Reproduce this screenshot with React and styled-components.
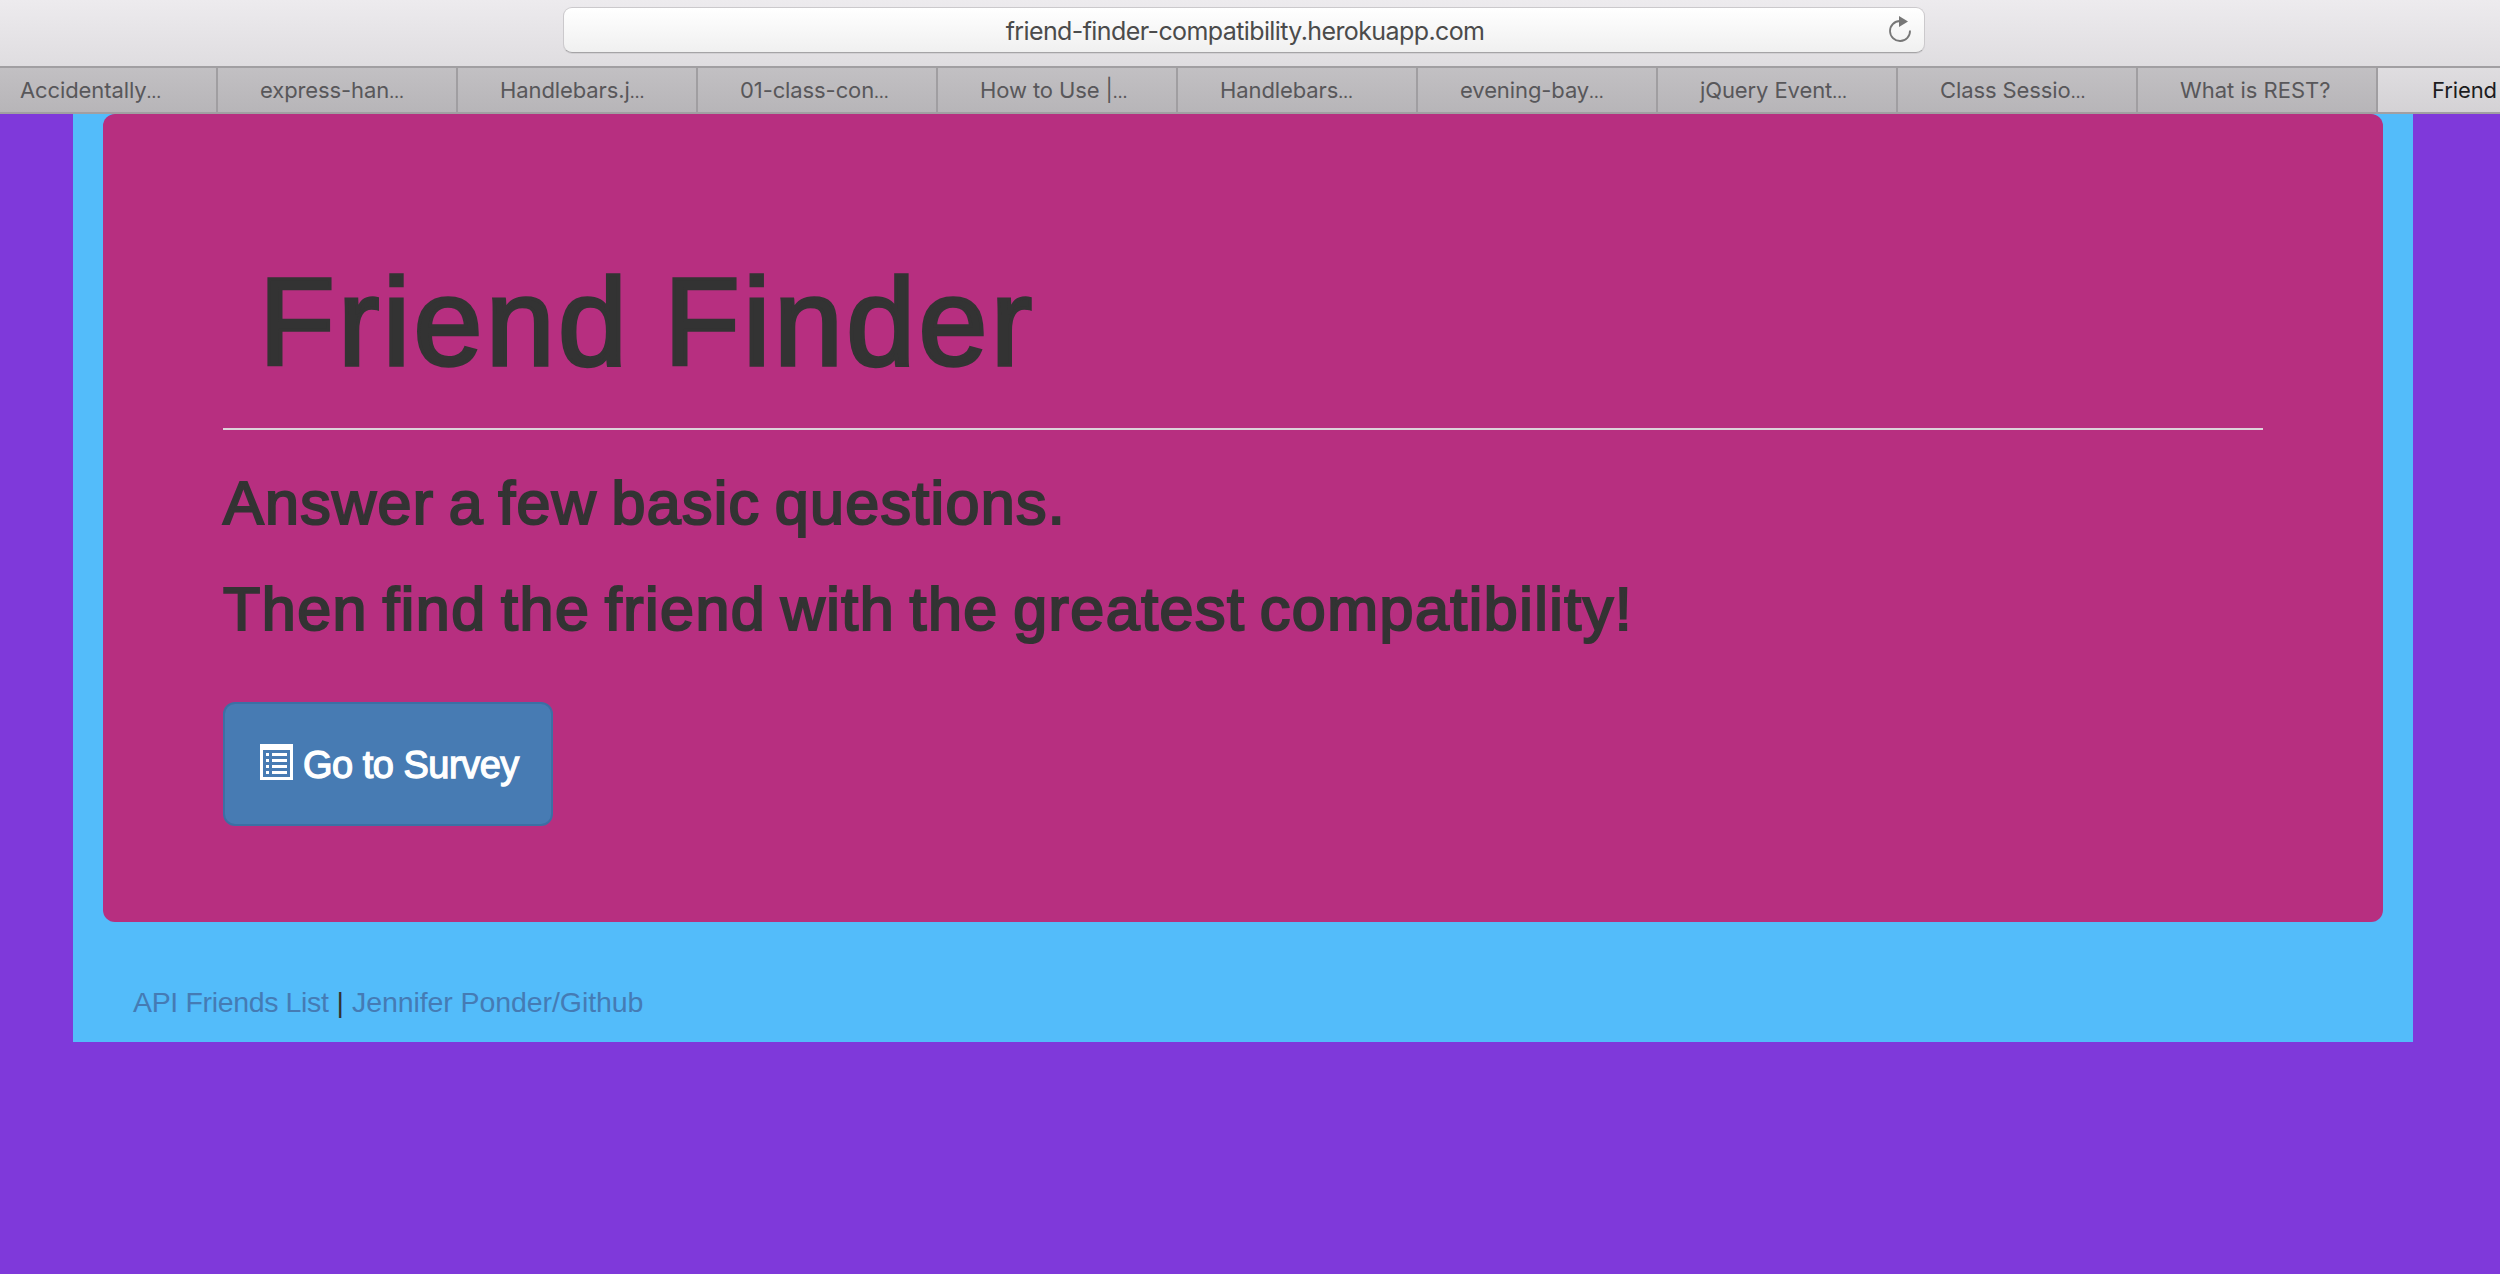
import React from "react";
import styled, { createGlobalStyle } from "styled-components";

const Global = createGlobalStyle`
  * { box-sizing: border-box; }
  body { margin: 0; background: #7f39da; overflow: hidden; font-family: "Liberation Sans", Arial, sans-serif; color: #333; }
`;

/* Browser chrome */
const Toolbar = styled.header`
  height: 66px;
  display: flex;
  justify-content: center;
  padding: 7px 575px 0 563px;
  background: linear-gradient(#edebee, #dfdde0);
`;
const Address = styled.div`
  flex: 1;
  height: 46px;
  display: grid;
  grid-template-columns: 1fr auto 1fr;
  align-items: center;
  border: 1px solid #cbc9cc;
  border-bottom-color: #a5a4a6;
  border-radius: 9px;
  background: linear-gradient(#fff, #f0f0f0);
  box-shadow: 0 1px 0 #d2d0d3;
  color: #4b4b4b;
`;
const Url = styled.span`
  grid-column: 2;
  padding: 2px 0 0 2px;
  font: 25px/36px Inter, sans-serif;
  letter-spacing: -0.6px;
  white-space: nowrap;
`;
const Reload = styled.svg`
  width: 26px;
  height: 30px;
  justify-self: end;
  margin-right: 11px;
`;
const TabBar = styled.nav`
  height: 48px;
  display: flex;
  border-top: 2px solid #a19fa2;
  border-bottom: 2px solid #a19fa2;
  overflow: hidden;
`;
const Tab = styled.div`
  flex: 0 0 240px;
  margin-left: ${p => (p.$first ? "-22px" : "0")};
  padding-left: ${p => (p.$active ? 54 : 42)}px;
  border-right: 2px solid #a09ea1;
  background: ${p => (p.$active ? "linear-gradient(#dfdde0, #d4d2d5)" : "linear-gradient(#c2c0c3, #b7b5b8)")};
  color: ${p => (p.$active ? "#1c1c20" : "#58575a")};
  font: 22px/44px Inter, sans-serif;
  letter-spacing: ${p => (p.$active ? "-0.1px" : "0")};
  white-space: nowrap;
`;
const TabText = styled.span`
  letter-spacing: -0.1px;
`;
const Ellipsis = styled.span`
  font-size: 17px;
`;

/* Page */
const Container = styled.main`
  width: 2340px;
  margin-left: 73px;
  padding: 0 30px 20px;
  background: #53bcfa;
`;
const Jumbotron = styled.section`
  padding: 138px 120px 96px;
  border-radius: 12px;
  background: #b72f80;
`;
const Title = styled.h1`
  margin: 0;
  padding-left: 36px;
  font-size: 124px;
  line-height: 140px;
  font-weight: 400;
  letter-spacing: 3.3px;
  word-spacing: -4px;
  -webkit-text-stroke: 3.5px #333;
`;
const Rule = styled.hr`
  height: 2px;
  margin: 36px 0 40px;
  border: 0;
  background: #ddd3da;
`;
const Lead = styled.h2`
  margin: 0 0 40px;
  font-size: 61px;
  line-height: 66px;
  font-weight: 400;
  letter-spacing: ${p => p.$spacing}px;
  word-spacing: -4px;
  -webkit-text-stroke: 2.2px #333;
`;
const Button = styled.button`
  display: flex;
  align-items: center;
  gap: 10px;
  width: 330px;
  height: 124px;
  margin-top: 60px;
  padding: 0 0 0 35px;
  border: 2px solid #3c6fa4;
  border-radius: 12px;
  background: #477bb3;
  color: #fff;
  font: 38px/48px "Liberation Sans", Arial, sans-serif;
  letter-spacing: -0.5px;
  -webkit-text-stroke: 1.3px #fff;
`;
const ButtonLabel = styled.span`
  padding-top: 2px;
`;
const ListIcon = styled.svg`
  width: 33px;
  height: 36px;
  margin-bottom: 4px;
`;
const Footer = styled.footer`
  display: flex;
  gap: 8px;
  margin-top: 60px;
  padding-left: 30px;
  font-size: 28.5px;
  line-height: 40px;
`;
const Link = styled.a`
  color: #457bb4;
  letter-spacing: ${p => p.$spacing}px;
`;

const tabs = ["Accidentally…", "express-han…", "Handlebars.j…", "01-class-con…", "How to Use |…", "Handlebars…", "evening-bay…", "jQuery Event…", "Class Sessio…", "What is REST?"];

function TabTitle({ text }) {
  if (!text.endsWith("…")) return text;
  return <TabText>{text.slice(0, -1)}<Ellipsis>…</Ellipsis></TabText>;
}

export default function App() {
  return (
    <>
      <Global />
      <Toolbar>
        <Address>
          <Url>friend-finder-compatibility.herokuapp.com</Url>
          <Reload viewBox="0 0 26 30">
            <path d="M13 6A10 10 0 1 0 23 15.5" fill="none" stroke="#777" strokeWidth="1.8" />
            <path d="M12 1L21 6.5L12 12Z" fill="#777" />
          </Reload>
        </Address>
      </Toolbar>
      <TabBar>
        {tabs.map((t, i) => <Tab key={i} $first={i === 0}><TabTitle text={t} /></Tab>)}
        <Tab $active>Friend</Tab>
      </TabBar>
      <Container>
        <Jumbotron>
          <Title>Friend Finder</Title>
          <Rule />
          <Lead $spacing={1.33}>Answer a few basic questions.</Lead>
          <Lead $spacing={1.48}>Then find the friend with the greatest compatibility!</Lead>
          <Button>
            <ListIcon viewBox="0 0 33 36" fill="#fff" shapeRendering="crispEdges">
              <path fillRule="evenodd" d="M0 0H33V36H0ZM3 6V33H30V6Z" />
              {[9, 15, 21, 27].map(y => <path key={y} d={`M6 ${y}h3v3h-3zM12 ${y}h15v3h-15z`} />)}
            </ListIcon>
            <ButtonLabel>Go to Survey</ButtonLabel>
          </Button>
        </Jumbotron>
        <Footer>
          <Link $spacing={-0.35}>API Friends List</Link>
          <span>|</span>
          <Link $spacing={-0.08}>Jennifer Ponder/Github</Link>
        </Footer>
      </Container>
    </>
  );
}
